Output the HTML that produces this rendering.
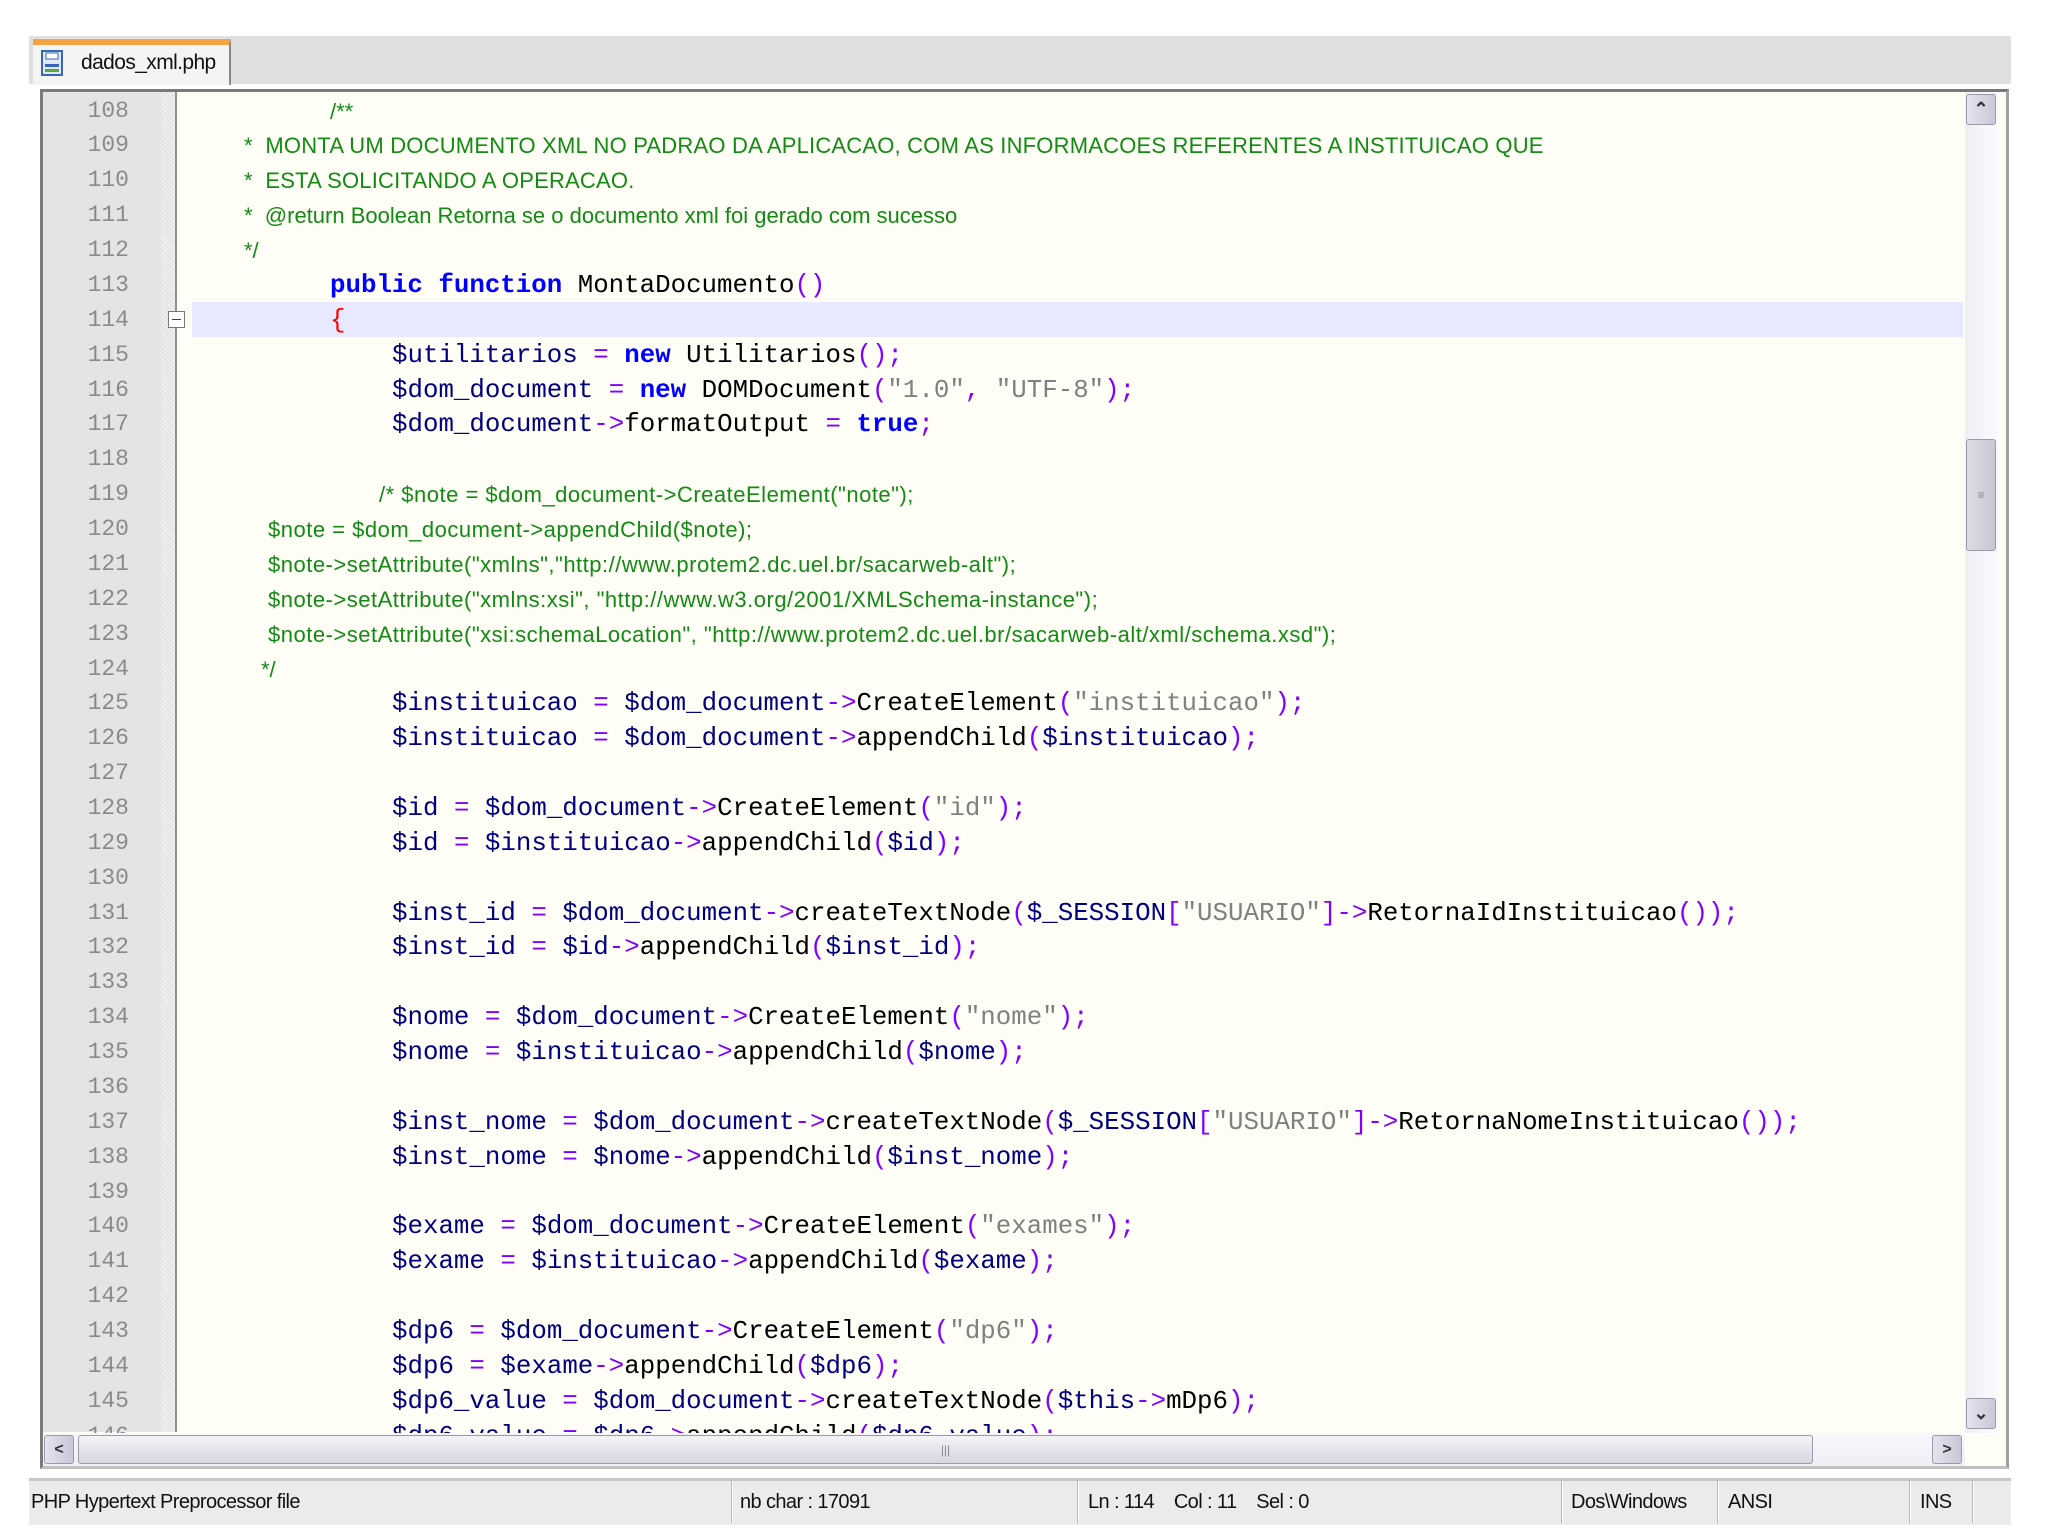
<!DOCTYPE html>
<html><head><meta charset="utf-8"><style>
body{margin:0;width:2048px;height:1535px;background:#fff;position:relative;overflow:hidden;font-family:"Liberation Sans",sans-serif}
.abs{position:absolute}
#tabbar{left:29px;top:36px;width:1982px;height:48px;background:#e0e0e0}
#tab{left:33px;top:39px;width:198px;height:46px;background:#f4f4f4;border-right:2px solid #888;border-top:6px solid #f5a443;box-sizing:border-box}
#tabtxt{left:81px;top:51px;font-size:21px;color:#111;letter-spacing:-0.6px}
#frame{left:40px;top:89px;width:1969px;height:1380px;border:3px solid #7a7a7a;border-right-color:#a0a0a0;border-bottom-color:#c0c0c0;box-sizing:border-box;background:#fefdf6;overflow:hidden}
#gut{left:43px;top:92px;width:118px;height:1340px;background:#e4e4e4}
#fold{left:161px;top:92px;width:15px;height:1340px;background:repeating-linear-gradient(45deg,#f0f0f0 0 2px,#dcdcdc 2px 3px)}
#vline{left:175px;top:92px;width:2px;height:1340px;background:#909090}
#hl{left:192px;top:302px;width:1771px;height:35px;background:#e8e8ff}
#code{left:43px;top:92px;width:1920px;height:1341px;overflow:hidden}
.ln{position:absolute;left:0;width:86px;text-align:right;font-family:"Liberation Mono",monospace;font-size:23px;color:#8a8a8a;height:35px;line-height:35px;top:calc(var(--n)*34.87px + 1.6px)}
.l{position:absolute;white-space:pre;font-family:"Liberation Mono",monospace;font-size:25.8px;color:#000;height:35px;line-height:35px;top:calc(var(--n)*34.87px + 1.6px)}
.c{font-family:"Liberation Sans",sans-serif;font-size:22px;color:#138a13}
.up{letter-spacing:0.2px}
.wide{letter-spacing:0.5px}
.v{color:#000080}.k{color:#0000ff;font-weight:bold}.o{color:#8000ff}.s{color:#808080}.r{color:#ff0000}
#vs{left:1965px;top:92px;width:33px;height:1341px;background:linear-gradient(90deg,#eeeef5,#fafafe)}
.btn{position:absolute;background:linear-gradient(90deg,#e4e4ee,#c8c8d8);border:1px solid #9a9aa8;border-radius:3px;box-sizing:border-box;display:flex;align-items:center;justify-content:center;color:#333;font-size:18px;font-weight:bold}
#hs{left:43px;top:1433px;width:1922px;height:33px;background:linear-gradient(#f8f8fc,#eeeef4)}
#sb{left:29px;top:1478px;width:1982px;height:47px;background:#ebebeb;border-top:3px solid #c8c8c8;box-sizing:border-box}
.st{position:absolute;top:1491px;font-size:20px;color:#111;letter-spacing:-0.6px}
.sep{position:absolute;top:1481px;width:1px;height:42px;background:#b8b8b8;border-right:1px solid #fff}
</style></head><body>
<div class="abs" id="tabbar"></div>
<div class="abs" id="tab"></div>
<svg class="abs" style="left:41px;top:50px" width="22" height="26" viewBox="0 0 22 26"><rect x="1" y="1" width="20" height="24" fill="#dfe8f8" stroke="#3a66b8" stroke-width="2"/><rect x="5" y="3" width="12" height="6" fill="#fff" stroke="#3a66b8"/><rect x="4" y="14" width="14" height="3" fill="#3a66b8"/><rect x="4" y="19" width="14" height="3" fill="#5aa83c"/></svg>
<div class="abs" id="tabtxt">dados_xml.php</div>
<div class="abs" id="frame"></div>
<div class="abs" id="gut"></div>
<div class="abs" id="fold"></div>
<div class="abs" id="hl"></div>
<div class="abs" id="vline"></div>
<div class="abs" style="left:168px;top:311px;width:17px;height:17px;border:1px solid #777;background:#fff;box-sizing:border-box"><div style="position:absolute;left:3px;top:7px;width:9px;height:1px;background:#444"></div></div>
<div class="abs" id="code">
<div class="ln" style="--n:0">108</div><div class="ln" style="--n:1">109</div><div class="ln" style="--n:2">110</div><div class="ln" style="--n:3">111</div><div class="ln" style="--n:4">112</div><div class="ln" style="--n:5">113</div><div class="ln" style="--n:6">114</div><div class="ln" style="--n:7">115</div><div class="ln" style="--n:8">116</div><div class="ln" style="--n:9">117</div><div class="ln" style="--n:10">118</div><div class="ln" style="--n:11">119</div><div class="ln" style="--n:12">120</div><div class="ln" style="--n:13">121</div><div class="ln" style="--n:14">122</div><div class="ln" style="--n:15">123</div><div class="ln" style="--n:16">124</div><div class="ln" style="--n:17">125</div><div class="ln" style="--n:18">126</div><div class="ln" style="--n:19">127</div><div class="ln" style="--n:20">128</div><div class="ln" style="--n:21">129</div><div class="ln" style="--n:22">130</div><div class="ln" style="--n:23">131</div><div class="ln" style="--n:24">132</div><div class="ln" style="--n:25">133</div><div class="ln" style="--n:26">134</div><div class="ln" style="--n:27">135</div><div class="ln" style="--n:28">136</div><div class="ln" style="--n:29">137</div><div class="ln" style="--n:30">138</div><div class="ln" style="--n:31">139</div><div class="ln" style="--n:32">140</div><div class="ln" style="--n:33">141</div><div class="ln" style="--n:34">142</div><div class="ln" style="--n:35">143</div><div class="ln" style="--n:36">144</div><div class="ln" style="--n:37">145</div><div class="ln" style="--n:38">146</div>

<div class="l c" style="--n:0;left:287px">/**</div>
<div class="l c up" style="--n:1;left:201px">*  MONTA UM DOCUMENTO XML NO PADRAO DA APLICACAO, COM AS INFORMACOES REFERENTES A INSTITUICAO QUE</div>
<div class="l c up" style="--n:2;left:201px">*  ESTA SOLICITANDO A OPERACAO.</div>
<div class="l c" style="--n:3;left:201px">*  @return Boolean Retorna se o documento xml foi gerado com sucesso</div>
<div class="l c" style="--n:4;left:201px">*/</div>
<div class="l" style="--n:5;left:287px"><span class="k">public</span> <span class="k">function</span> MontaDocumento<span class="o">()</span></div>
<div class="l" style="--n:6;left:287px"><span class="r">{</span></div>
<div class="l" style="--n:7;left:349px"><span class="v">$utilitarios</span> <span class="o">=</span> <span class="k">new</span> Utilitarios<span class="o">();</span></div>
<div class="l" style="--n:8;left:349px"><span class="v">$dom_document</span> <span class="o">=</span> <span class="k">new</span> DOMDocument<span class="o">(</span><span class="s">"1.0"</span><span class="o">,</span> <span class="s">"UTF-8"</span><span class="o">);</span></div>
<div class="l" style="--n:9;left:349px"><span class="v">$dom_document</span><span class="o">-&gt;</span>formatOutput <span class="o">=</span> <span class="k">true</span><span class="o">;</span></div>
<div class="l c wide" style="--n:11;left:336px">/* $note = $dom_document-&gt;CreateElement("note");</div>
<div class="l c wide" style="--n:12;left:225px">$note = $dom_document-&gt;appendChild($note);</div>
<div class="l c wide" style="--n:13;left:225px">$note-&gt;setAttribute("xmlns","http://www.protem2.dc.uel.br/sacarweb-alt");</div>
<div class="l c wide" style="--n:14;left:225px">$note-&gt;setAttribute("xmlns:xsi", "http://www.w3.org/2001/XMLSchema-instance");</div>
<div class="l c wide" style="--n:15;left:225px">$note-&gt;setAttribute("xsi:schemaLocation", "http://www.protem2.dc.uel.br/sacarweb-alt/xml/schema.xsd");</div>
<div class="l c" style="--n:16;left:218px">*/</div>
<div class="l" style="--n:17;left:349px"><span class="v">$instituicao</span> <span class="o">=</span> <span class="v">$dom_document</span><span class="o">-&gt;</span>CreateElement<span class="o">(</span><span class="s">"instituicao"</span><span class="o">);</span></div>
<div class="l" style="--n:18;left:349px"><span class="v">$instituicao</span> <span class="o">=</span> <span class="v">$dom_document</span><span class="o">-&gt;</span>appendChild<span class="o">(</span><span class="v">$instituicao</span><span class="o">);</span></div>
<div class="l" style="--n:20;left:349px"><span class="v">$id</span> <span class="o">=</span> <span class="v">$dom_document</span><span class="o">-&gt;</span>CreateElement<span class="o">(</span><span class="s">"id"</span><span class="o">);</span></div>
<div class="l" style="--n:21;left:349px"><span class="v">$id</span> <span class="o">=</span> <span class="v">$instituicao</span><span class="o">-&gt;</span>appendChild<span class="o">(</span><span class="v">$id</span><span class="o">);</span></div>
<div class="l" style="--n:23;left:349px"><span class="v">$inst_id</span> <span class="o">=</span> <span class="v">$dom_document</span><span class="o">-&gt;</span>createTextNode<span class="o">(</span><span class="v">$_SESSION</span><span class="o">[</span><span class="s">"USUARIO"</span><span class="o">]-&gt;</span>RetornaIdInstituicao<span class="o">());</span></div>
<div class="l" style="--n:24;left:349px"><span class="v">$inst_id</span> <span class="o">=</span> <span class="v">$id</span><span class="o">-&gt;</span>appendChild<span class="o">(</span><span class="v">$inst_id</span><span class="o">);</span></div>
<div class="l" style="--n:26;left:349px"><span class="v">$nome</span> <span class="o">=</span> <span class="v">$dom_document</span><span class="o">-&gt;</span>CreateElement<span class="o">(</span><span class="s">"nome"</span><span class="o">);</span></div>
<div class="l" style="--n:27;left:349px"><span class="v">$nome</span> <span class="o">=</span> <span class="v">$instituicao</span><span class="o">-&gt;</span>appendChild<span class="o">(</span><span class="v">$nome</span><span class="o">);</span></div>
<div class="l" style="--n:29;left:349px"><span class="v">$inst_nome</span> <span class="o">=</span> <span class="v">$dom_document</span><span class="o">-&gt;</span>createTextNode<span class="o">(</span><span class="v">$_SESSION</span><span class="o">[</span><span class="s">"USUARIO"</span><span class="o">]-&gt;</span>RetornaNomeInstituicao<span class="o">());</span></div>
<div class="l" style="--n:30;left:349px"><span class="v">$inst_nome</span> <span class="o">=</span> <span class="v">$nome</span><span class="o">-&gt;</span>appendChild<span class="o">(</span><span class="v">$inst_nome</span><span class="o">);</span></div>
<div class="l" style="--n:32;left:349px"><span class="v">$exame</span> <span class="o">=</span> <span class="v">$dom_document</span><span class="o">-&gt;</span>CreateElement<span class="o">(</span><span class="s">"exames"</span><span class="o">);</span></div>
<div class="l" style="--n:33;left:349px"><span class="v">$exame</span> <span class="o">=</span> <span class="v">$instituicao</span><span class="o">-&gt;</span>appendChild<span class="o">(</span><span class="v">$exame</span><span class="o">);</span></div>
<div class="l" style="--n:35;left:349px"><span class="v">$dp6</span> <span class="o">=</span> <span class="v">$dom_document</span><span class="o">-&gt;</span>CreateElement<span class="o">(</span><span class="s">"dp6"</span><span class="o">);</span></div>
<div class="l" style="--n:36;left:349px"><span class="v">$dp6</span> <span class="o">=</span> <span class="v">$exame</span><span class="o">-&gt;</span>appendChild<span class="o">(</span><span class="v">$dp6</span><span class="o">);</span></div>
<div class="l" style="--n:37;left:349px"><span class="v">$dp6_value</span> <span class="o">=</span> <span class="v">$dom_document</span><span class="o">-&gt;</span>createTextNode<span class="o">(</span><span class="v">$this</span><span class="o">-&gt;</span>mDp6<span class="o">);</span></div>
<div class="l" style="--n:38;left:349px"><span class="v">$dp6_value</span> <span class="o">=</span> <span class="v">$dp6</span><span class="o">-&gt;</span>appendChild<span class="o">(</span><span class="v">$dp6_value</span><span class="o">);</span></div>
</div>
<div class="abs" id="vs"></div>
<div class="btn" style="left:1966px;top:94px;width:30px;height:31px">&#8963;</div>
<div class="btn" style="left:1966px;top:439px;width:30px;height:112px;background:linear-gradient(90deg,#dcdce6,#c8c8d4);font-size:12px;font-weight:normal;color:#888">&#8801;</div>
<div class="btn" style="left:1966px;top:1398px;width:30px;height:31px">&#8964;</div>
<div class="abs" id="hs"></div>
<div class="btn" style="left:44px;top:1435px;width:30px;height:29px;font-size:16px">&lt;</div>
<div class="btn" style="left:78px;top:1435px;width:1735px;height:29px;background:linear-gradient(#f4f4f8,#d6d6e0);font-size:12px;font-weight:normal;color:#888">|||</div>
<div class="btn" style="left:1932px;top:1435px;width:30px;height:29px;font-size:16px">&gt;</div>
<div class="abs" id="sb"></div>
<div class="st" style="left:31px">PHP Hypertext Preprocessor file</div>
<div class="sep" style="left:731px"></div>
<div class="st" style="left:740px">nb char : 17091</div>
<div class="sep" style="left:1077px"></div>
<div class="st" style="left:1088px;white-space:pre">Ln : 114    Col : 11    Sel : 0</div>
<div class="sep" style="left:1561px"></div>
<div class="st" style="left:1571px">Dos\Windows</div>
<div class="sep" style="left:1717px"></div>
<div class="st" style="left:1728px">ANSI</div>
<div class="sep" style="left:1909px"></div>
<div class="st" style="left:1920px">INS</div>
<div class="sep" style="left:1972px"></div>
</body></html>
